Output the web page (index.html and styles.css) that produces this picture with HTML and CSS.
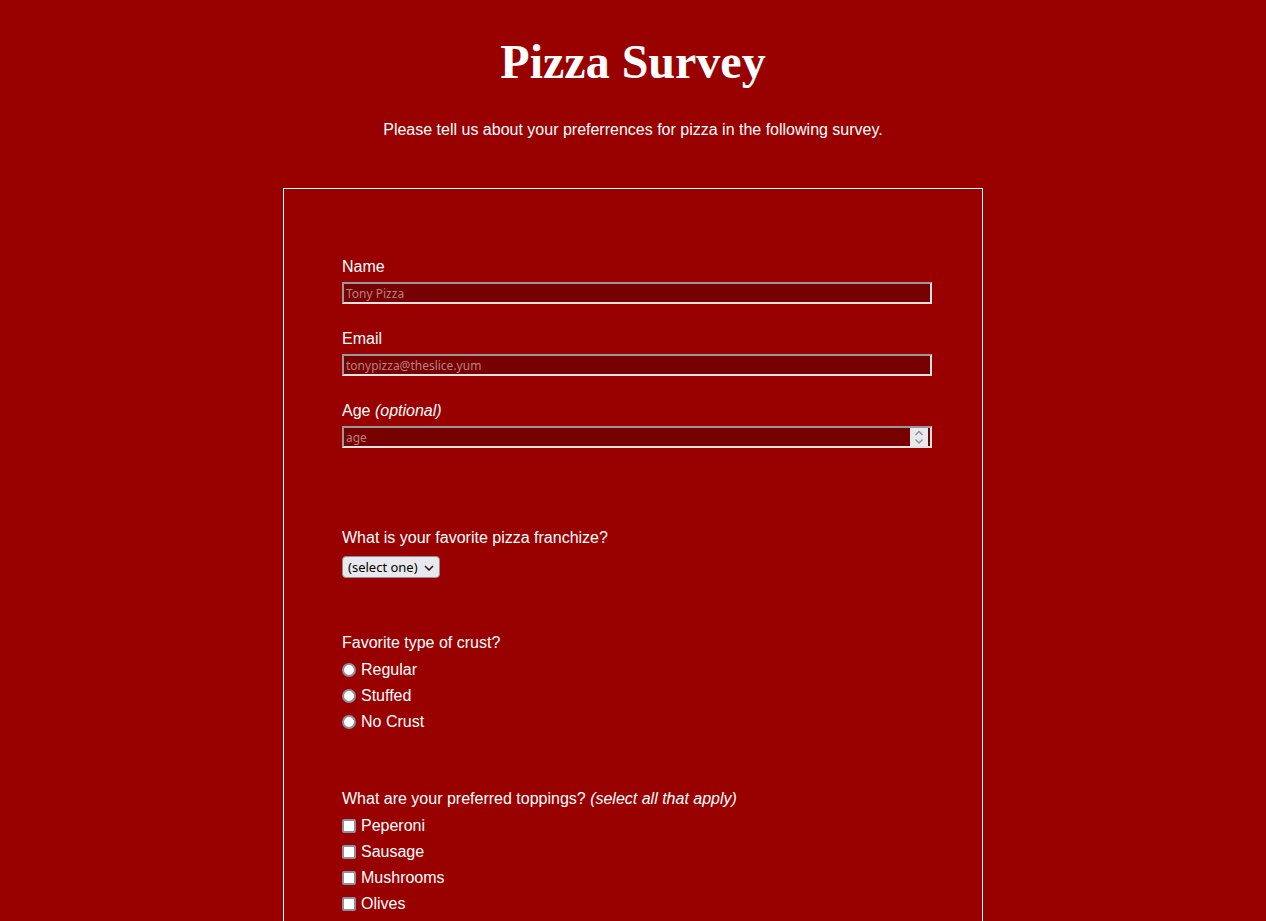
FILE: index.html
```html
<!DOCTYPE html>
<html lang="en">
<head>
<meta charset="utf-8">
<meta name="viewport" content="width=device-width, initial-scale=1">
<title>Pizza Survey</title>
<link rel="stylesheet" href="styles.css">
</head>
<body>
<header class="intro">
  <h1 class="title">Pizza Survey</h1>
  <p class="description">Please tell us about your preferrences for pizza in the following survey.</p>
</header>
<form class="survey">
  <div class="fields">
    <div class="field">
      <label for="name">Name</label>
      <input class="textbox" id="name" type="text" placeholder="Tony Pizza">
    </div>
    <div class="field">
      <label for="email">Email</label>
      <input class="textbox" id="email" type="email" placeholder="tonypizza@theslice.yum">
    </div>
    <div class="field">
      <label for="age">Age <em>(optional)</em></label>
      <div class="number">
        <input class="textbox" id="age" type="number" placeholder="age">
        <svg class="spinner" viewBox="0 0 18 18" aria-hidden="true"><path d="M5.500 7 9 3.500 12.500 7M5.500 11.500 9 15 12.500 11.500"/></svg>
      </div>
    </div>
  </div>
  <div class="question">
    <label for="franchise">What is your favorite pizza franchize?</label>
    <div class="dropdown">
      <select class="select" id="franchise"><option>(select one)</option></select>
      <svg class="chevron" viewBox="0 0 10 6" aria-hidden="true"><path d="M1 1 5 5 9 1"/></svg>
    </div>
  </div>
  <fieldset class="question">
    <legend>Favorite type of crust?</legend>
    <label class="option"><input class="radio" type="radio" name="crust" value="regular">Regular</label>
    <label class="option"><input class="radio" type="radio" name="crust" value="stuffed">Stuffed</label>
    <label class="option"><input class="radio" type="radio" name="crust" value="none">No Crust</label>
  </fieldset>
  <fieldset class="question">
    <legend>What are your preferred toppings? <em>(select all that apply)</em></legend>
    <label class="option"><input class="check" type="checkbox" name="topping" value="peperoni">Peperoni</label>
    <label class="option"><input class="check" type="checkbox" name="topping" value="sausage">Sausage</label>
    <label class="option"><input class="check" type="checkbox" name="topping" value="mushrooms">Mushrooms</label>
    <label class="option"><input class="check" type="checkbox" name="topping" value="olives">Olives</label>
  </fieldset>
</form>
</body>
</html>
```
FILE: styles.css
```css
* {
  box-sizing: border-box;
}

body {
  display: flex;
  flex-direction: column;
  min-height: 100vh;
  margin: 0;
  background: #990000;
  color: #fff;
  font: 16px/18px "Liberation Sans", Arial, sans-serif;
}

.intro {
  padding: 34px 16px 49px;
  text-align: center;
}

.title {
  margin: 0 0 31px;
  font: bold 48px/56px "Liberation Serif", "Times New Roman", serif;
}

.description {
  margin: 0;
}

.survey {
  flex: 1;
  width: 100%;
  max-width: 700px;
  margin: 0 auto;
  padding: 69px 50px 0 58px;
  border: 1px solid #fff;
  border-bottom: 0;
}

.fields {
  display: grid;
  gap: 26px;
  margin-bottom: 81px;
}

.field {
  display: grid;
  gap: 6px;
}

.textbox {
  display: block;
  width: 100%;
  height: 22px;
  margin: 0;
  padding: 0 2px;
  border: 2px solid;
  border-color: #999 #e3e3e3 #e3e3e3 #999;
  border-radius: 0;
  background: #770000;
  color: #fff;
  font: 12px/18px "Noto Sans", Tahoma, sans-serif;
  appearance: textfield;
}

.textbox::placeholder {
  color: #bb8080;
  opacity: 1;
}

.textbox::-webkit-inner-spin-button {
  appearance: none;
  margin: 0;
}

.number,
.dropdown {
  position: relative;
}

.spinner {
  position: absolute;
  top: 2px;
  right: 4px;
  width: 18px;
  height: 18px;
  background: #e9e9ed;
  fill: none;
  stroke: #9090a0;
  stroke-width: 1.5;
  pointer-events: none;
}

.question {
  min-width: 0;
  margin: 0 0 55px;
  padding: 0;
  border: 0;
}

.question:last-child {
  margin-bottom: 0;
}

.question legend {
  margin-bottom: 5px;
  padding: 0;
}

.dropdown {
  width: 98px;
  margin: 9px 0 56px;
}

.select {
  display: block;
  width: 100%;
  height: 22px;
  padding: 0 5px;
  border: 1px solid #8f8f9d;
  border-radius: 4px;
  background: #e9e9ed;
  color: #000;
  font: 13px/20px "Noto Sans", Tahoma, sans-serif;
  appearance: none;
}

.chevron {
  position: absolute;
  top: 9px;
  right: 6px;
  width: 10px;
  height: 6px;
  fill: none;
  stroke: #15141a;
  stroke-width: 1.5;
  pointer-events: none;
}

.option {
  display: flex;
  align-items: center;
  gap: 5px;
  padding: 4px 0;
}

.radio,
.check {
  width: 14px;
  height: 14px;
  margin: 0;
  border: 2px solid #8f8f9d;
  border-radius: 2px;
  background: #fff;
  appearance: none;
}

.radio {
  border-radius: 50%;
}

.radio:checked,
.check:checked {
  border-color: #0060df;
  background: #0060df;
  box-shadow: inset 0 0 0 2px #fff;
}
```
